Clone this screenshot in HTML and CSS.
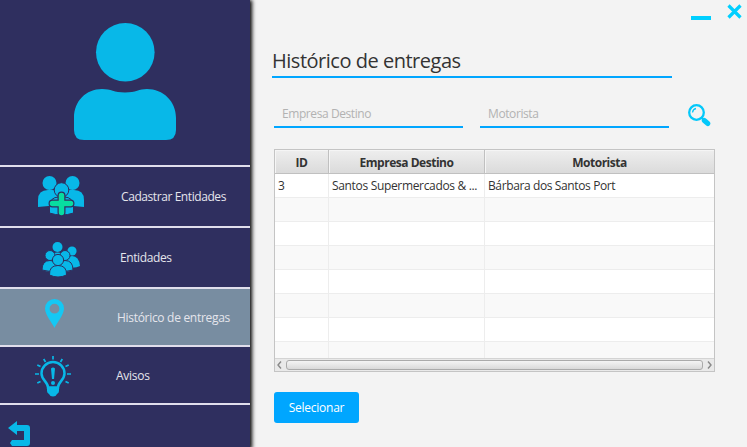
FILE: index.html
```html
<!DOCTYPE html>
<html lang="pt-BR">
<head>
<meta charset="utf-8">
<title>Histórico de entregas</title>
<link rel="stylesheet" href="styles.css">
</head>
<body>
<div class="app">
  <nav class="sidebar">
    <div class="profile">
      <svg width="102" height="118" viewBox="0 0 102 118"><circle cx="51.300" cy="29.300" r="29.300"/><path d="M0 95C0 78 12 66 28 66C37 66 40 69.500 51 69.500S65 66 73 66C89 66 102 78 102 95V107Q102 117 92 117H10Q0 117 0 107Z"/></svg>
    </div>
    <a class="item cadastrar">
      <svg class="icon" width="48" height="42" viewBox="0 0 48 42">
        <g class="person"><circle cx="12.500" cy="7" r="7"/><path d="M1 31V24Q1 14 11 14H15Q20 14 22 19V29Z"/><circle cx="35.500" cy="7" r="7"/><path d="M47 31V24Q47 14 37 14H33Q28 14 26 19V29Z"/></g>
        <g class="person front"><circle cx="24.500" cy="14" r="7.300"/><path d="M12.500 37V31Q12.500 21 22 21H27Q36.500 21 36.500 31V37Q24.500 41 12.500 37Z"/></g>
        <path class="plus-gap" d="M24.500 19.500V36.500M15.500 27.500H33.500"/><path class="plus" d="M24.500 19.500V36.500M15.500 27.500H33.500"/>
      </svg><span>Cadastrar Entidades</span>
    </a>
    <a class="item entidades">
      <svg class="icon" width="40" height="38" viewBox="0 0 40 38">
        <g class="person"><circle cx="15.500" cy="5" r="5"/><path d="M8 20Q8 10.500 15.500 10.500T23 20Z"/><circle cx="30" cy="9" r="4.600"/><path d="M23 24Q23 14 30 14T38 24Q33 27 23 25Z"/></g>
        <g class="person front"><circle cx="8" cy="13.500" r="5"/><path d="M0 28Q0 18.500 8 18.500T17 28Q8 31 0 28Z"/><circle cx="23" cy="13.500" r="5"/><path d="M15 28Q15 18.500 23 18.500T31 28Q23 31 15 28Z"/></g>
        <g class="person front"><circle cx="16" cy="18" r="5.600"/><path d="M7.500 33Q7 23.500 16 23.500T24.500 33Q16 37 7.500 33Z"/></g>
      </svg><span>Entidades</span>
    </a>
    <a class="item historico active">
      <svg class="icon" width="20" height="30" viewBox="0 0 20 30"><path fill-rule="evenodd" d="M9.500 0A9.500 9.500 0 0 1 19 9.500C19 16 11 25 9.500 29C8 25 0 16 0 9.500A9.500 9.500 0 0 1 9.500 0ZM9.500 4.800A4.900 4.900 0 1 0 9.500 14.600A4.900 4.900 0 1 0 9.500 4.800Z"/></svg><span>Histórico de entregas</span>
    </a>
    <a class="item avisos">
      <svg class="icon" width="36" height="41" viewBox="0 0 36 41"><path class="line" stroke-width="2.500" d="M13 31.500C13 26 6.500 24 6.500 17.500A11.500 11.500 0 0 1 29.500 17.500C29.500 24 23 26 23 31.500Z"/><path d="M12 31H24V35Q24 37 22 38Q21 40.500 18 40.500T14 38Q12 37 12 35Z"/><path class="line" stroke-width="1.700" d="M18 0V3.500M8.700 3L10.500 6M27.300 3L25.500 6M2.300 9L5.500 10.500M33.700 9L30.500 10.500M0 18H4M32 18H36M2.300 27L5.500 25.500M33.700 27L30.500 25.500"/><path d="M16 12.500Q18 10.500 20 12.500L19 23H17Z"/><circle cx="18" cy="27" r="2"/></svg><span>Avisos</span>
    </a>
    <a class="back"><svg width="22" height="25" viewBox="0 0 22 25"><path d="M0 7L9 0V4H19Q22 4 22 7V22Q22 25 19 25H4L2 22L4 19H16V10H9V14Z"/></svg></a>
  </nav>
  <main class="content">
    <div class="window-controls">
      <span class="minimize"></span>
      <svg width="15" height="15" viewBox="0 0 15 15"><path d="M1.500 1.500L13.500 13.500M13.500 1.500L1.500 13.500"/></svg>
    </div>
    <h1 class="title"><span>Histórico de entregas</span></h1>
    <div class="filters">
      <div class="field"><span class="empresa-label">Empresa Destino</span></div>
      <div class="field"><span class="motorista-label">Motorista</span></div>
      <svg class="search" width="23" height="23" viewBox="0 0 23 23"><circle cx="8.500" cy="8.500" r="7.300"/><path class="shine" d="M4.500 8.500Q5 5 8 4.500"/><path class="neck" d="M13.500 13.500L16 16"/><path class="handle" d="M16.300 16.500L19.800 19.500"/></svg>
    </div>
    <div class="table">
      <div class="row head"><div><span>ID</span></div><div><span class="th-empresa">Empresa Destino</span></div><div><span class="th-motorista">Motorista</span></div></div>
      <div class="row"><div>3</div><div><span class="td-empresa">Santos Supermercados &amp; ...</span></div><div><span class="td-motorista">Bárbara dos Santos Port</span></div></div>
      <div class="row alt"><div></div><div></div><div></div></div>
      <div class="row"><div></div><div></div><div></div></div>
      <div class="row alt"><div></div><div></div><div></div></div>
      <div class="row"><div></div><div></div><div></div></div>
      <div class="row alt"><div></div><div></div><div></div></div>
      <div class="row"><div></div><div></div><div></div></div>
      <div class="row alt last"><div></div><div></div><div></div></div>
      <div class="scrollbar"><svg width="11" height="13" viewBox="0 0 11 13"><path d="M6 2.500L3 6L6 9.500"/></svg><span class="thumb"></span><svg width="11" height="13" viewBox="0 0 11 13"><path d="M5 2.500L8 6L5 9.500"/></svg></div>
    </div>
    <div class="button"><span>Selecionar</span></div>
  </main>
</div>
</body>
</html>
```
FILE: styles.css
```css
* { box-sizing: border-box; }
body { margin: 0; background: #f3f3f3; font: 12px/16px "Open Sans", "Noto Sans", sans-serif; color: #333; }
span { white-space: nowrap; }
svg { display: block; flex: none; }
.app { display: flex; width: 747px; height: 447px; overflow: hidden; background: #f3f3f3; }

.sidebar { flex: none; width: 250px; height: 447px; background: #2f2f5f; box-shadow: 1px 1px 4px 1px #000; }
.sidebar svg { fill: #08b8e8; }
.profile { height: 167px; border-bottom: 2px solid #e0deec; padding: 23px 0 0 74px; }
.item { display: flex; border-bottom: 2px solid #e0deec; color: #e5e5ec; }
.cadastrar { height: 61px; padding: 9px 0 0 37px; }
.cadastrar span { margin: 13px 0 0 36px; letter-spacing: -.42px; }
.entidades { height: 61px; padding: 14px 0 0 42px; }
.entidades span { margin: 8px 0 0 38px; letter-spacing: -.4px; }
.historico { height: 58px; padding: 10px 0 0 45px; }
.historico span { margin: 11px 0 0 52px; letter-spacing: -.3px; }
.avisos { height: 58px; padding: 9px 0 0 35px; }
.avisos span { margin: 12px 0 0 45px; letter-spacing: -.25px; }
.active { background: #788da1; }
.sidebar .active svg { fill: #14c8f4; }
.front { stroke: #2f2f5f; stroke-width: 1; }
.plus, .plus-gap { fill: none; stroke-linecap: round; }
.plus { stroke: #08dda0; stroke-width: 5.500; }
.plus-gap { stroke: #2f2f5f; stroke-width: 8; }
.line { fill: none; stroke: #08b8e8; }
.back { display: block; padding: 16px 0 0 8px; }

.content { flex: 1; padding-left: 24px; }
.window-controls { display: flex; justify-content: flex-end; height: 46px; padding: 4px 5px 0 0; gap: 16px; }
.window-controls path { stroke: #00cfff; stroke-width: 3.200; }
.minimize { width: 20px; height: 4px; margin-top: 12px; background: #00cfff; }
.title { width: 400px; height: 32px; margin: 0 0 0 -2px; border-bottom: 2px solid #00a6ff; font-size: 20px; line-height: 30px; font-weight: 400; }
.title span { letter-spacing: -.48px; }
.filters { display: flex; height: 50px; margin-top: 22px; gap: 17px; }
.field { width: 189px; height: 28px; padding: 6px 0 0 8px; border-bottom: 2px solid #00a6ff; color: #b2b2b2; }
.field + .field { margin-right: 2px; }
.empresa-label { letter-spacing: -.42px; }
.motorista-label { letter-spacing: -.4px; }
.search { margin-top: 4px; fill: none; stroke: #04c8fa; stroke-width: 2.300; }
.search .shine { stroke-width: 1.300; }
.search .handle { stroke-width: 5; stroke-linecap: round; }

.table { width: 441px; height: 223px; margin-top: -1px; border: 1px solid #c4c4c4; background: #fff; }
.row { display: grid; grid-template-columns: 54px 156px 229px; height: 24px; line-height: 23px; }
.row > div { padding-left: 3px; border-right: 1px solid #ededed; border-bottom: 1px solid #ededed; overflow: hidden; }
.row > div:last-child { border-right: 0; }
.alt { background: #f9f9f9; }
.last { height: 16px; }
.last > div { border-bottom: 0; }
.head { font-weight: 700; text-align: center; background: linear-gradient(#eee, #dadada); }
.head > div { padding: 1px 0 0; border-color: #c0c0c0; box-shadow: inset 1px 1px #f5f5f5; }
.head > div:last-child { border-right: 0; }
.head span { letter-spacing: -.48px; }
.td-empresa { letter-spacing: -.33px; }
.td-motorista { letter-spacing: -.38px; }
.scrollbar { display: flex; height: 13px; border-top: 1px solid #d4d4d4; background: #e9e9e9; }
.scrollbar svg { fill: none; stroke: #888; stroke-width: 1.400; }
.thumb { flex: 1; height: 10px; margin-top: 1px; border: 1px solid #aaa; border-radius: 3px; background: linear-gradient(#f4f4f4, #d9d9d9); }
.button { width: 85px; height: 31px; margin-top: 20px; border-radius: 3px; background: #00a6ff; color: #fff; text-align: center; line-height: 31px; }
.button span { letter-spacing: -.25px; }
```
